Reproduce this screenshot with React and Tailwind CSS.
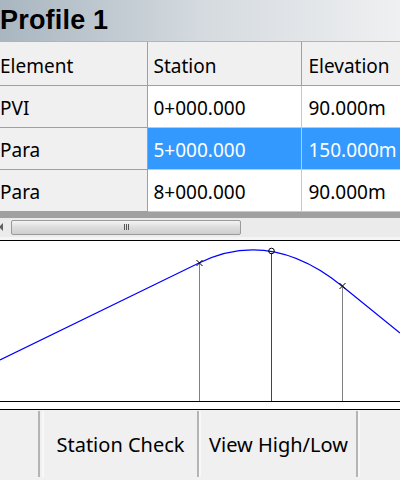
import React from 'react';

const rows = [
  { element: 'PVI', station: '0+000.000', elevation: '90.000m', selected: false },
  { element: 'Para', station: '5+000.000', elevation: '150.000m', selected: true },
  { element: 'Para', station: '8+000.000', elevation: '90.000m', selected: false },
];

const font = { fontFamily: '"Noto Sans", "Open Sans", sans-serif' };

const Cross = ({ x, y }) => (
  <path d={`M${x - 3} ${y - 3} L${x + 3} ${y + 3} M${x + 3} ${y - 3} L${x - 3} ${y + 3}`} stroke="#000" strokeWidth="1" />
);

const ProfileChart = () => (
  <svg width="400" height="160" viewBox="0 241 400 160" className="block">
    {/* tangent + vertical curve + tangent */}
    <path
      d="M0 360 L199 263 Q270.5 228.2 342 286 L400 333"
      fill="none"
      stroke="#0000ff"
      strokeWidth="1.2"
    />
    <line x1="199.5" y1="263" x2="199.5" y2="402" stroke="#808080" strokeWidth="1" />
    <line x1="342.5" y1="286" x2="342.5" y2="402" stroke="#808080" strokeWidth="1" />
    <line x1="271.5" y1="253" x2="271.5" y2="402" stroke="#e00000" strokeWidth="1" />
    <Cross x={199.5} y={263} />
    <Cross x={342.5} y={286} />
    <circle cx="271.5" cy="251" r="2.8" fill="none" stroke="#000" strokeWidth="1" />
  </svg>
);

const App = () => {
  return (
    <div className="w-[400px] h-[480px] overflow-hidden bg-white flex flex-col" style={font}>
      {/* title */}
      <div className="h-[42px] shrink-0 flex items-center bg-gradient-to-r from-[#a9b6c0] via-[#d4dadf] to-[#eff0f1] border-b border-[#b4b4b4]">
        <h1
          className="ml-0 text-[27px] font-bold text-black leading-none tracking-[0.2px]"
          style={{ fontFamily: '"Liberation Sans", Arial, sans-serif' }}
        >
          Profile 1
        </h1>
      </div>

      {/* grid */}
      <div className="shrink-0 w-[400px] overflow-hidden">
        <table className="border-collapse text-[19px] text-black w-[460px] table-fixed">
          <colgroup>
            <col className="w-[147px]" />
            <col className="w-[154px]" />
            <col className="w-[159px]" />
          </colgroup>
          <thead>
            <tr className="h-[43px] bg-[#f0f0f0]">
              <th className="font-normal text-left pl-0 pt-[5px] border-b border-r border-[#a0a0a0]">Element</th>
              <th className="font-normal text-left pl-[6px] pt-[5px] border-b border-r border-[#a0a0a0]">Station</th>
              <th className="font-normal text-left pl-[7px] pt-[5px] border-b border-[#a0a0a0]">Elevation</th>
            </tr>
          </thead>
          <tbody>
            {rows.map((row, i) => (
              <tr key={i} className="h-[42px]">
                <td className="bg-[#f0f0f0] pl-0 pt-[5px] border-b border-r border-[#a0a0a0]">{row.element}</td>
                <td
                  className={
                    row.selected
                      ? 'bg-[#3399ff] text-white pl-[6px] pt-[5px] border-b border-r border-[#c8c8c8]'
                      : 'bg-white pl-[6px] pt-[5px] border-b border-r border-[#c8c8c8]'
                  }
                >
                  {row.station}
                </td>
                <td
                  className={
                    row.selected
                      ? 'bg-[#3399ff] text-white pl-[7px] pt-[5px] border-b border-[#c8c8c8]'
                      : 'bg-white pl-[7px] pt-[5px] border-b border-[#c8c8c8]'
                  }
                >
                  {row.elevation}
                </td>
              </tr>
            ))}
          </tbody>
        </table>
      </div>

      {/* gray band below grid */}
      <div className="h-[6px] shrink-0 bg-[#a0a0a0]" />

      {/* horizontal scrollbar */}
      <div className="h-[19px] shrink-0 bg-[#ebebeb] flex items-center">
        <div className="w-[11px] flex items-center justify-start">
          <span className="block w-0 h-0 border-y-[4px] border-y-transparent border-r-[4px] border-r-[#606060] ml-[-1px]" />
        </div>
        <div className="w-[230px] h-[15px] rounded-[2px] border border-[#9a9a9a] bg-gradient-to-b from-[#f4f4f4] via-[#dcdcdc] to-[#cfcfcf] flex items-center justify-center">
          <div className="flex gap-[1px]">
            <span className="block w-[1px] h-[6px] bg-[#555]" />
            <span className="block w-[1px] h-[6px] bg-[#555]" />
            <span className="block w-[1px] h-[6px] bg-[#555]" />
          </div>
        </div>
      </div>
      <div className="h-[3px] shrink-0 bg-[#f5f5f5]" />

      {/* chart */}
      <div className="shrink-0 border-t border-black border-b">
        <ProfileChart />
      </div>
      <div className="h-[8px] shrink-0 bg-white border-b border-black" />

      {/* buttons */}
      <div className="flex-1 bg-[#f0f0f0] flex items-stretch pt-[1px] pb-[3px]">
        <button className="w-[40px] shrink-0 border-r-2 border-[#b4b4b4] bg-[#f0f0f0]" />
        <button className="ml-[2px] w-[157px] shrink-0 border-x-2 border-l-[#f8f8f8] border-r-[#b4b4b4] bg-[#f0f0f0] text-[20px] text-black pt-[3px]">
          Station Check
        </button>
        <button className="w-[159px] shrink-0 border-x-2 border-l-[#f8f8f8] border-r-[#b4b4b4] bg-[#f0f0f0] text-[20px] text-black pt-[3px]">
          View High/Low
        </button>
        <button className="flex-1 border-l-2 border-[#f8f8f8] bg-[#f0f0f0]" />
      </div>
    </div>
  );
};

export default App;
